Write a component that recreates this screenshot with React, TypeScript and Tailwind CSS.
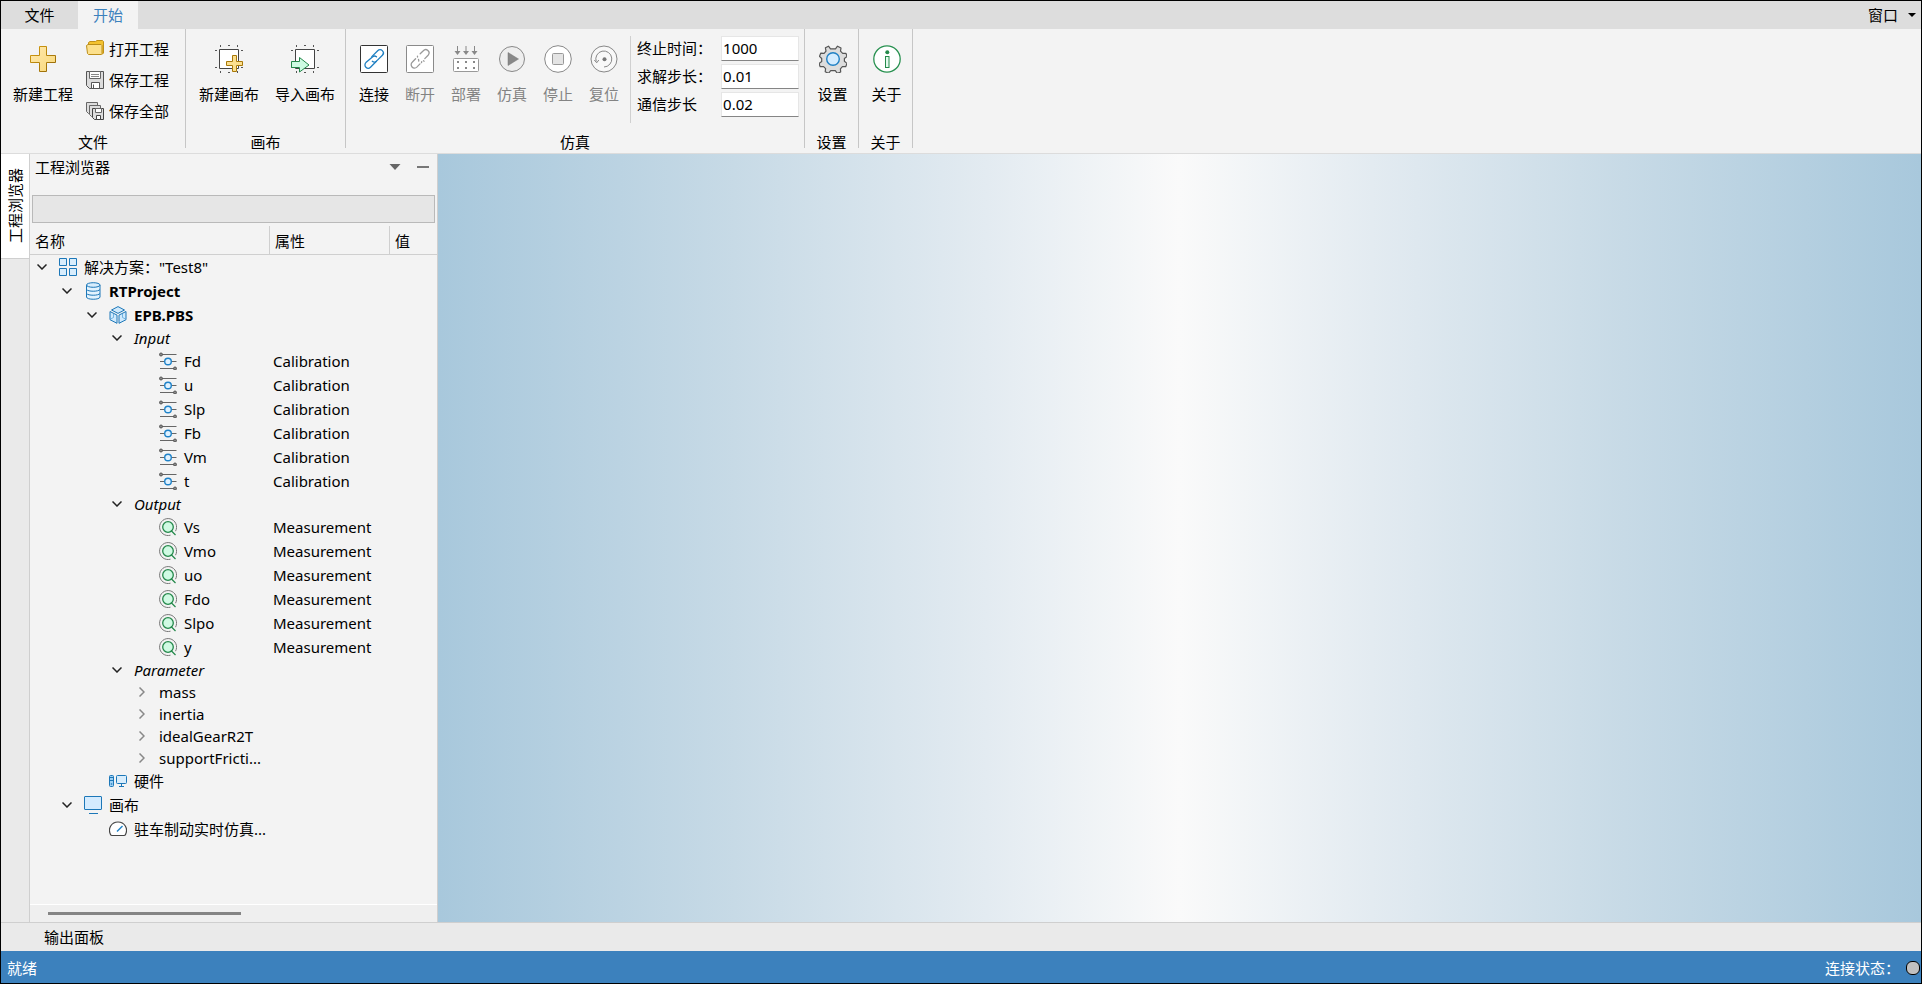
import { useState } from 'react'
import type { ReactNode } from 'react'
import clsx from 'clsx'

type IconKind = 'solution' | 'database' | 'cube' | 'slider' | 'measure' | 'hardware' | 'canvas' | 'gauge'

interface TreeRow {
  level: number
  label: string
  arrow?: 'open' | 'closed'
  icon?: IconKind
  style?: 'bold' | 'italic'
  attr?: string
}

const INPUTS = ['Fd', 'u', 'Slp', 'Fb', 'Vm', 't']
const OUTPUTS = ['Vs', 'Vmo', 'uo', 'Fdo', 'Slpo', 'y']
const PARAMETERS = ['mass', 'inertia', 'idealGearR2T', 'supportFricti...']

const ROWS: TreeRow[] = [
  { level: 0, label: '解决方案："Test8"', arrow: 'open', icon: 'solution' },
  { level: 1, label: 'RTProject', arrow: 'open', icon: 'database', style: 'bold' },
  { level: 2, label: 'EPB.PBS', arrow: 'open', icon: 'cube', style: 'bold' },
  { level: 3, label: 'Input', arrow: 'open', style: 'italic' },
  ...INPUTS.map((label): TreeRow => ({ level: 4, label, icon: 'slider', attr: 'Calibration' })),
  { level: 3, label: 'Output', arrow: 'open', style: 'italic' },
  ...OUTPUTS.map((label): TreeRow => ({ level: 4, label, icon: 'measure', attr: 'Measurement' })),
  { level: 3, label: 'Parameter', arrow: 'open', style: 'italic' },
  ...PARAMETERS.map((label): TreeRow => ({ level: 4, label, arrow: 'closed' })),
  { level: 2, label: '硬件', icon: 'hardware' },
  { level: 1, label: '画布', arrow: 'open', icon: 'canvas' },
  { level: 2, label: '驻车制动实时仿真...', icon: 'gauge' },
]

const INDENT = ['pl-0', 'pl-[25px]', 'pl-[50px]', 'pl-[75px]', 'pl-[100px]']

function Svg({ size, children }: { size: 18 | 28; children: ReactNode }) {
  return (
    <svg width={size} height={size} viewBox={`0 0 ${size} ${size}`} fill="none" className="shrink-0" aria-hidden="true">
      {children}
    </svg>
  )
}

/* Ribbon icons, 28px */

function NewProjectIcon() {
  return (
    <Svg size={28}>
      <defs>
        <linearGradient id="gold" x1="0" y1="0" x2="1" y2="1">
          <stop offset="0" stopColor="#ffe9b0" />
          <stop offset="1" stopColor="#f9d877" />
        </linearGradient>
        <linearGradient id="goldEdge" x1="0" y1="0" x2="1" y2="1">
          <stop offset="0" stopColor="#d9a010" />
          <stop offset="1" stopColor="#8f6408" />
        </linearGradient>
      </defs>
      <path d="M10.5 1.5h7v9h9v7h-9v9h-7v-9h-9v-7h9z" fill="url(#gold)" stroke="url(#goldEdge)" />
    </Svg>
  )
}

function CanvasFrame() {
  return (
    <>
      <path d="M4.5 4.5h19v19h-19z" fill="#fff" stroke="#444" />
      <path
        d="M5.5 0v2M13 .5h2M22.5 0v2M5.500 26v2M13 27.500h2M22.5 26v2M0 5.500h2M26 5.500h2M0 22.500h2M26 22.500h2"
        stroke="#555"
      />
    </>
  )
}

function NewCanvasIcon() {
  return (
    <Svg size={28}>
      <CanvasFrame />
      <path d="M17.5 10.5h4v6h6v4h-6v6h-4v-6h-6v-4h6z" fill="#fbdf8f" stroke="#a87808" />
    </Svg>
  )
}

function ImportCanvasIcon() {
  return (
    <Svg size={28}>
      <CanvasFrame />
      <path d="M.5 16.5h8v-4l9.500 7.500-9.500 7v-4.500h-8z" fill="#cdfbe2" stroke="#23874a" />
    </Svg>
  )
}

function LinkIcon({ broken }: { broken?: boolean }) {
  return (
    <Svg size={28}>
      <rect x=".5" y=".5" width="27" height="27" rx="1" fill="#fff" stroke={broken ? '#8a8a8a' : '#333'} />
      <g stroke={broken ? '#999' : '#1e7fc2'} strokeWidth="1.3" strokeLinecap="round">
        {broken ? (
          <>
            <path d="M14.2 8.8 17.3 5.8a3.2 3.2 0 0 1 4.8 4.4L18.800 13.600" />
            <path d="M9.6 13.800 6.200 17.200a3.300 3.300 0 0 0 4.600 4.900l3.200-3.200" />
            <path d="M11.500 11.200v.8M12.500 14.500l.3 1.500M15.500 17.500l.2-.8M17.500 15.800l.6.400" />
          </>
        ) : (
          <>
            <path d="M11.800 11.600 17.700 5.700a3.200 3.200 0 0 1 4.700 4.600l-5.900 5.800c-1.300 1.300-3 1.200-4.200.2" />
            <path d="M16.500 11.800c-1.200-1-2.900-1-4.100.2l-6.500 5.600a3.200 3.200 0 0 0 4.600 4.600l5.900-5.900" />
          </>
        )}
      </g>
    </Svg>
  )
}

function DeployIcon() {
  return (
    <Svg size={28}>
      <path d="M5.500 1v7M14 1v7M22.500 1v7" stroke="#888" />
      <path d="M2.500 6l3 4 3-4zM11 6l3 4 3-4zM19.500 6l3 4 3-4z" fill="#888" />
      <rect x="1.500" y="13.500" width="25" height="13" rx="1" fill="#fff" stroke="#999" />
      <path d="M5 17h2M13 17h2M21 17h2M5 23h2M13 23h2M21 23h2" stroke="#888" strokeWidth="2" />
    </Svg>
  )
}

function PlayIcon() {
  return (
    <Svg size={28}>
      <circle cx="14" cy="14" r="12.5" fill="#eee" stroke="#888" />
      <path d="M10 7.500 20.500 14 10 20.500z" fill="#888" stroke="#777" strokeWidth=".5" />
    </Svg>
  )
}

function StopIcon() {
  return (
    <Svg size={28}>
      <circle cx="14" cy="14" r="13.3" fill="#fff" stroke="#888" />
      <rect x="8.5" y="8.5" width="11" height="11" rx="1" fill="#e4e4e4" stroke="#999" />
    </Svg>
  )
}

function ResetIcon() {
  return (
    <Svg size={28}>
      <circle cx="14" cy="14" r="13" fill="#f8f8f8" stroke="#888" />
      <path d="M6.200 16.500A8 8 0 1 1 14 22" stroke="#888" />
      <path d="M4.300 15 6.700 17.800 8.800 15" stroke="#888" />
      <circle cx="14.5" cy="14.3" r="2" fill="#777" />
    </Svg>
  )
}

function GearIcon() {
  return (
    <Svg size={28}>
      <path
        d="M9.500 1.200 11.500 3.800h5L18.500 1.200 22 3l-.5 3.200 2.200 2.200 3.300-.1 1 3.300-2.600 1.800v2.900l2.600 2.100-1.300 3.300-3.300-.1-2 2.200.3 3.200-3.400 1.300-2-2.600h-4.600l-2.200 2.600-3.300-1.500.4-3.200-2-2-3.400.1-1.200-3.300 2.700-2v-2.900L.500 11.300 1.700 8.200l3.400.1L7 6.200 6.400 2.800z"
        fill="#ddd"
        stroke="#555"
        strokeWidth="1.200"
        strokeLinejoin="round"
      />
      <circle cx="14" cy="14" r="6.300" fill="#d4ecff" stroke="#2080c4" strokeWidth="1.4" />
    </Svg>
  )
}

function InfoIcon() {
  return (
    <Svg size={28}>
      <circle cx="14" cy="14" r="13.2" fill="#fff" stroke="#289150" strokeWidth="1.3" />
      <circle cx="14.300" cy="7.200" r="2" fill="#258a4b" />
      <rect x="12.500" y="11.500" width="3.500" height="11" fill="#e2fbed" stroke="#258a4b" />
    </Svg>
  )
}

/* Small icons, 18px */

function FolderIcon() {
  return (
    <Svg size={18}>
      <path d="M2.500 4V2.500L4 1.500h5.500L11 .5h5.500l1 1V13l-1.500 1.500z" fill="#f3c22f" stroke="#c0901a" />
      <path d="M.5 5.500 2 4.500h13l1 1v8l-1 1H2.500l-1-1z" fill="#fce08c" stroke="#bb8d18" />
    </Svg>
  )
}

function SaveIcon() {
  return (
    <Svg size={18}>
      <path d="M.5.5h17v17h-14l-3-3z" fill="#dcdcdc" stroke="#555" />
      <path d="M3.5.5h11v7h-11z" fill="#fff" stroke="#666" />
      <path d="M5 3.500h8M5 5.500h8" stroke="#888" />
      <path d="M5.500 17.500v-6h8v6z" fill="#fff" stroke="#555" />
      <path d="M7.500 13.500v4" stroke="#555" />
    </Svg>
  )
}

function SaveAllIcon() {
  return (
    <Svg size={18}>
      <path d="M.5.5h11v11h-9l-2-2z" fill="#ddd" stroke="#666" />
      <path d="M3.500 3.500h11v11h-9l-2-2z" fill="#ddd" stroke="#666" />
      <path d="M6.500 6.500h11v11h-9l-2-2z" fill="#ddd" stroke="#444" />
      <path d="M9.500 6.500h6v4h-6z" fill="#fff" stroke="#666" />
      <path d="M10.500 17.500v-4h4v4z" fill="#fff" stroke="#444" />
    </Svg>
  )
}

function TreeIcon({ kind }: { kind: IconKind }) {
  switch (kind) {
    case 'solution':
      return (
        <Svg size={18}>
          <path d="M.5.5h7v7h-7zM10.500.5h7v7h-7zM.5 10.500h7v7h-7zM10.500 10.500h7v7h-7z" fill="#d8edfc" stroke="#1c77b8" />
        </Svg>
      )
    case 'database':
      return (
        <Svg size={18}>
          <path d="M2.500 3v12c0 3 13.500 3 13.500 0V3" fill="#e3f3fe" stroke="#1c77b8" />
          <ellipse cx="9.250" cy="3" rx="6.750" ry="2.300" fill="#d8edfc" stroke="#1c77b8" />
          <path d="M2.500 7.500c1.500 2.300 12 2.300 13.500 0M2.500 11.500c1.500 2.300 12 2.300 13.500 0" stroke="#1c77b8" />
        </Svg>
      )
    case 'cube':
      return (
        <Svg size={18}>
          <path
            d="M9 .600 15.500 4 9 7.400 2.500 4zM1 5.500l7 3.600v8.200l-7-3.600zM17 5.500l-7 3.600v8.200l7-3.600z"
            fill="#cfe9fc"
            stroke="#1c77b8"
            strokeLinejoin="round"
          />
          <path d="M4.500 8v3.500l-3 1.500M13.500 8v3.500l3 1.500" stroke="#5aa5d8" strokeWidth=".8" />
        </Svg>
      )
    case 'slider':
      return (
        <Svg size={18}>
          <path d="M2 2.500h15.500M1 9.500h16.500M1 16.500h15" stroke="#666" />
          <circle cx="2" cy="2.500" r="1.500" fill="#888" stroke="#555" />
          <circle cx="16" cy="16.500" r="1.500" fill="#888" stroke="#555" />
          <circle cx="9" cy="9.500" r="3.300" fill="#e0f2ff" stroke="#1f82c8" strokeWidth="1.4" />
        </Svg>
      )
    case 'measure':
      return (
        <Svg size={18}>
          <path d="M11.500 17.200A8.500 8.500 0 1 1 16.500 13.200" stroke="#777" />
          <circle cx="9" cy="9" r="5.300" fill="#d0fae3" stroke="#24894b" strokeWidth="1.3" />
          <path d="M12 12.500 16.500 17" stroke="#24894b" strokeWidth="1.3" />
        </Svg>
      )
    case 'hardware':
      return (
        <Svg size={18}>
          <rect x=".5" y="3.500" width="4" height="11" rx="1" fill="#9dd0f4" stroke="#1c77b8" />
          <path d="M1 5.500h3M1 8.500h3" stroke="#1c77b8" />
          <circle cx="2.500" cy="12" r=".8" fill="#1c77b8" />
          <rect x="7.500" y="3.500" width="10" height="8" rx="1" fill="#d8edfc" stroke="#1c77b8" />
          <path d="M12.500 12v2M10 14.500h5" stroke="#1c77b8" />
        </Svg>
      )
    case 'canvas':
      return (
        <Svg size={18}>
          <rect x=".5" y=".5" width="17" height="13" rx=".5" fill="#d4ebfe" stroke="#1c77b8" />
          <path d="M5 17.500h9" stroke="#1c77b8" />
        </Svg>
      )
    case 'gauge':
      return (
        <Svg size={18}>
          <path
            d="M1.500 14.500C-1.500 8.500 2.500 2 9 2s10.500 6.500 7.500 12.500c-.3.8-.8 1-1.500 1H3c-.7 0-1.200-.2-1.500-1z"
            fill="#fff"
            stroke="#444"
            strokeWidth="1.2"
          />
          <path d="M8 11.500 13.500 6" stroke="#1f82c8" strokeWidth="1.5" />
        </Svg>
      )
  }
}

function Chevron({ state }: { state?: 'open' | 'closed' }) {
  return (
    <span className="flex w-[22px] shrink-0 justify-center pl-[2px]">
      {state === 'open' && (
        <svg width="10" height="6" viewBox="0 0 10 6" fill="none" aria-hidden="true">
          <path d="M.5.5 5 5 9.500.5" stroke="#222" strokeWidth="1.5" />
        </svg>
      )}
      {state === 'closed' && (
        <svg width="6" height="10" viewBox="0 0 6 10" fill="none" aria-hidden="true">
          <path d="M.5.5 5 5 .5 9.500" stroke="#888" strokeWidth="1.5" />
        </svg>
      )}
    </span>
  )
}

function RibbonGroup({ title, className, children }: { title: string; className?: string; children: ReactNode }) {
  return (
    <section className="flex">
      <div className="flex flex-col">
        <div className={clsx('flex h-[103px]', className)}>{children}</div>
        <h2 className="text-center">{title}</h2>
      </div>
      <div className="h-[119px] w-px bg-[#c6c6c6]" />
    </section>
  )
}

interface RibbonButtonProps {
  label: string
  icon: ReactNode
  disabled?: boolean
  className?: string
}

function RibbonButton({ label, icon, disabled, className }: RibbonButtonProps) {
  return (
    <button
      type="button"
      disabled={disabled}
      className={clsx('flex flex-col items-center gap-[11px] pt-4 whitespace-nowrap disabled:text-[#838383]', className)}
    >
      {icon}
      <span>{label}</span>
    </button>
  )
}

function SmallButton({ label, icon }: { label: string; icon: ReactNode }) {
  return (
    <button type="button" className="flex h-[31px] items-center gap-[5px] whitespace-nowrap">
      {icon}
      {label}
    </button>
  )
}

function StepField({ id, label, initial }: { id: string; label: string; initial: string }) {
  const [value, setValue] = useState(initial)
  return (
    <div className="flex items-center">
      <label htmlFor={id} className="w-[84px] pb-[2px]">
        {label}
      </label>
      <input
        id={id}
        value={value}
        onChange={(e) => setValue(e.target.value)}
        className="h-[25px] w-[78px] border border-[#e6e6e6] border-b-[#858585] bg-white px-px pb-[2px] outline-none"
      />
    </div>
  )
}

function Ribbon() {
  return (
    <div className="flex h-[125px] shrink-0 border-b border-[#dcdcdc] bg-[#f3f3f3]">
      <RibbonGroup title="文件" className="gap-[13px] pr-4 pl-3">
        <RibbonButton label="新建工程" icon={<NewProjectIcon />} />
        <div className="pt-1">
          <SmallButton label="打开工程" icon={<FolderIcon />} />
          <SmallButton label="保存工程" icon={<SaveIcon />} />
          <SmallButton label="保存全部" icon={<SaveAllIcon />} />
        </div>
      </RibbonGroup>
      <RibbonGroup title="画布" className="gap-4 pr-[10px] pl-[13px]">
        <RibbonButton label="新建画布" icon={<NewCanvasIcon />} />
        <RibbonButton label="导入画布" icon={<ImportCanvasIcon />} />
      </RibbonGroup>
      <RibbonGroup title="仿真" className="px-[5px]">
        <RibbonButton className="w-[46px]" label="连接" icon={<LinkIcon />} />
        <RibbonButton className="w-[46px]" label="断开" icon={<LinkIcon broken />} disabled />
        <RibbonButton className="w-[46px]" label="部署" icon={<DeployIcon />} disabled />
        <RibbonButton className="w-[46px]" label="仿真" icon={<PlayIcon />} disabled />
        <RibbonButton className="w-[46px]" label="停止" icon={<StopIcon />} disabled />
        <RibbonButton className="w-[46px]" label="复位" icon={<ResetIcon />} disabled />
        <div className="mt-[7px] ml-[3px] flex h-[87px] border-l border-[#d0d0d0] pl-[6px]">
          <div className="flex flex-col gap-[3px]">
            <StepField id="stop-time" label="终止时间：" initial="1000" />
            <StepField id="solve-step" label="求解步长：" initial="0.01" />
            <StepField id="comm-step" label="通信步长" initial="0.02" />
          </div>
        </div>
      </RibbonGroup>
      <RibbonGroup title="设置">
        <RibbonButton className="w-[53px] pl-[2px]" label="设置" icon={<GearIcon />} />
      </RibbonGroup>
      <RibbonGroup title="关于">
        <RibbonButton className="w-[53px] pl-[2px]" label="关于" icon={<InfoIcon />} />
      </RibbonGroup>
    </div>
  )
}

function ProjectTree() {
  return (
    <table className="w-full table-fixed border-separate border-spacing-0 text-left">
      <colgroup>
        <col className="w-[240px]" />
        <col className="w-[120px]" />
        <col />
      </colgroup>
      <thead>
        <tr className="h-[29px]">
          <th className="border-r border-b border-[#cfcfcf] pt-[2px] pl-[5px] font-normal">名称</th>
          <th className="border-r border-b border-[#cfcfcf] pt-[2px] pl-[5px] font-normal">属性</th>
          <th className="border-b border-[#cfcfcf] pt-[2px] pl-[5px] font-normal">值</th>
        </tr>
      </thead>
      <tbody>
        {ROWS.map((row) => (
          <tr key={`${row.level}-${row.label}`} className={row.icon ? 'h-6' : 'h-[22px]'}>
            <td className="p-0">
              <div className={clsx('flex items-center gap-[7px] whitespace-nowrap', INDENT[row.level])}>
                <Chevron state={row.arrow} />
                {row.icon && <TreeIcon kind={row.icon} />}
                <span className={clsx(row.style === 'bold' && 'font-bold', row.style === 'italic' && 'italic')}>
                  {row.label}
                </span>
              </div>
            </td>
            <td className="p-0 pl-[3px]">{row.attr}</td>
            <td className="p-0" />
          </tr>
        ))}
      </tbody>
    </table>
  )
}

function ProjectBrowser() {
  const [filter, setFilter] = useState('')
  return (
    <aside className="flex w-[408px] shrink-0 flex-col border-r border-[#cfcfcf] bg-[#f3f3f3]">
      <header className="flex h-[41px] items-start justify-between pt-[3px] pr-2 pl-[5px]">
        <h1>工程浏览器</h1>
        <div className="flex h-5 items-center gap-4">
          <button type="button" aria-label="菜单">
            <svg width="12" height="6" viewBox="0 0 12 6" aria-hidden="true">
              <path d="M.5 0h11L6 6z" fill="#666" />
            </svg>
          </button>
          <button type="button" aria-label="隐藏" className="h-[2px] w-3 bg-[#777]" />
        </div>
      </header>
      <input
        aria-label="筛选"
        value={filter}
        onChange={(e) => setFilter(e.target.value)}
        className="mx-[2px] mb-[3px] h-7 shrink-0 border border-[#b9b9b9] bg-[#e6e6e6] px-1 outline-none"
      />
      <div className="min-h-0 flex-1 overflow-hidden">
        <ProjectTree />
      </div>
      <div className="flex h-[18px] shrink-0 items-center border-t border-white bg-[#efefef] pl-[18px]">
        <div className="h-[3px] w-[193px] bg-[#858585]" />
      </div>
    </aside>
  )
}

export default function App() {
  return (
    <div className="flex h-screen flex-col overflow-hidden border border-black bg-[#f3f3f3] font-['Noto_Sans','Noto_Sans_CJK_SC',sans-serif] text-[15px] leading-5 text-black">
      <nav className="flex h-7 shrink-0 items-stretch bg-[#dddddd]">
        <button type="button" className="w-[77px]">
          文件
        </button>
        <button type="button" className="w-[60px] bg-[#f3f3f3] text-[#3c81bd]">
          开始
        </button>
        <button type="button" className="ml-auto flex items-center gap-[10px] pr-[5px]">
          窗口
          <svg width="8" height="4" viewBox="0 0 8 4" aria-hidden="true">
            <path d="M0 0h8L4 4z" fill="#000" />
          </svg>
        </button>
      </nav>
      <Ribbon />
      <main className="flex min-h-0 flex-1">
        <div className="w-[29px] shrink-0 border-r border-[#cfcfcf] bg-[#eaeaea]">
          <button type="button" className="flex h-[105px] w-full items-center justify-center border-b border-[#cfcfcf] bg-white">
            <span className="rotate-180 whitespace-nowrap [text-orientation:sideways] [writing-mode:vertical-rl]">工程浏览器</span>
          </button>
        </div>
        <ProjectBrowser />
        <div className="flex-1 bg-[linear-gradient(to_right,#a8c8dc,#c7dae6_20%,#e3ebf1_37%,#fafafa_50%,#e3ebf1_63%,#c7dae6_80%,#a8c8dc)]" />
      </main>
      <div className="flex h-[29px] shrink-0 items-center border-t border-[#cfcfcf] bg-[#eaeaea] pl-[43px]">
        <button type="button">输出面板</button>
      </div>
      <footer className="flex h-8 shrink-0 items-center justify-between bg-[#3c81bd] pt-[2px] pr-px pl-[6px] text-white">
        <span>就绪</span>
        <div className="flex items-center gap-[6px]">
          <span>连接状态：</span>
          <span className="h-[14px] w-[14px] rounded-[6px] border border-black bg-[#c0c0c0]" />
        </div>
      </footer>
    </div>
  )
}
